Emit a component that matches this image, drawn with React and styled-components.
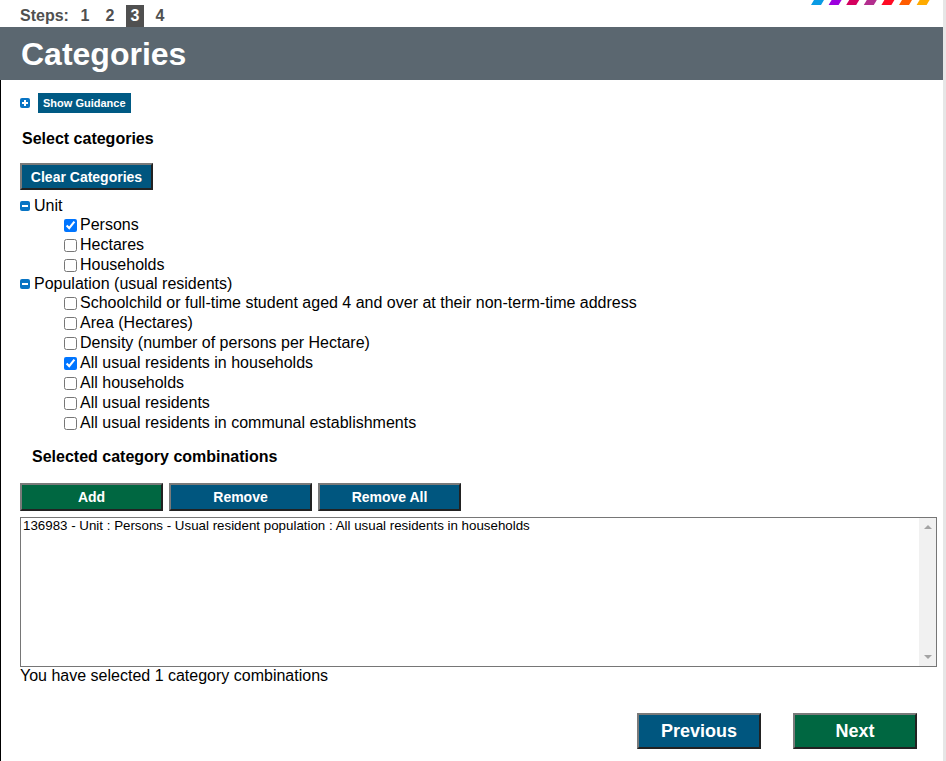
import React from 'react';
import styled, { createGlobalStyle } from 'styled-components';

const GlobalStyle = createGlobalStyle`
  html, body {
    margin: 0;
    padding: 0;
    background: #fff;
  }
  body {
    font-family: "Liberation Sans", Arial, sans-serif;
    color: #000;
  }
`;

const Page = styled.div`
  width: 943px;
  min-height: 761px;
  border-right: 3px solid #e6e6e6;
  box-shadow: inset -1px 0 0 #fff;
`;

const TopBar = styled.div`
  height: 27px;
  display: flex;
  justify-content: space-between;
  align-items: flex-start;
  padding-left: 20px;
`;

const Steps = styled.div`
  display: flex;
  align-items: center;
  height: 22px;
  margin-top: 5px;
  font-size: 16px;
  font-weight: bold;
  color: #505050;
`;

const StepLabel = styled.span`
  margin-right: 7px;
`;

const Step = styled.span`
  display: inline-flex;
  justify-content: center;
  align-items: center;
  width: 18px;
  height: 22px;
  margin-right: 7px;
  color: ${({ active }) => (active ? '#fff' : '#505050')};
  background: ${({ active }) => (active ? '#505050' : 'transparent')};
`;

const Stripes = styled.svg`
  margin-right: 8px;
  display: block;
`;

const Header = styled.h1`
  margin: 0;
  height: 53px;
  background: #5b6770;
  color: #fff;
  font-size: 32px;
  font-weight: bold;
  line-height: 54px;
  padding-left: 21px;
`;

const Content = styled.div`
  border-left: 1px solid #000;
  padding: 13px 0 0 19px;
  min-height: 681px;
  box-sizing: border-box;
`;

const GuidanceRow = styled.div`
  display: flex;
  align-items: center;
  gap: 8px;
`;

const SmallButton = styled.button`
  font-family: inherit;
  font-size: 11px;
  font-weight: bold;
  color: #fff;
  background: #005a84;
  border: none;
  height: 20px;
  padding: 0 5px;
  cursor: pointer;
`;

const SectionTitle = styled.h2`
  margin: 0;
  font-size: ${({ size }) => size || 16}px;
  font-weight: bold;
  line-height: 20px;
  padding-left: ${({ indent }) => indent || 2}px;
`;

const Spacer = styled.div`
  height: ${({ h }) => h}px;
`;

const Button = styled.button`
  font-family: inherit;
  font-weight: bold;
  font-size: ${({ big }) => (big ? 18 : 14)}px;
  color: #fff;
  background: ${({ variant }) => (variant === 'green' ? '#006741' : '#00567f')};
  border: 2px solid;
  border-color: #7a7a7a #222 #222 #7a7a7a;
  width: ${({ width }) => width}px;
  height: ${({ height }) => height}px;
  padding: 0;
  cursor: pointer;
`;

const Tree = styled.div`
  margin-top: 7px;
`;

const GroupRow = styled.div`
  display: flex;
  align-items: center;
  height: 18px;
  font-size: 16px;
  gap: 4px;
`;

const CheckRow = styled.label`
  display: flex;
  align-items: center;
  height: 20px;
  font-size: 16px;
  padding-left: 44px;

  input {
    margin: 0 3px 0 0;
    width: 13px;
    height: 13px;
  }
`;

const ButtonBar = styled.div`
  display: flex;
  gap: 6px;
  margin-top: 16px;
`;

const ListBox = styled.div`
  margin-top: 6px;
  width: 917px;
  height: 150px;
  box-sizing: border-box;
  border: 1px solid #767676;
  display: flex;
`;

const ListItems = styled.div`
  flex: 1;
  padding: 0 2px;
  font-size: 13.33px;
  line-height: 15px;
`;

const Scrollbar = styled.div`
  width: 17px;
  background: #f1f1f1;
  display: flex;
  flex-direction: column;
  justify-content: space-between;
  align-items: center;
  padding: 7px 0;
`;

const Arrow = styled.span`
  width: 0;
  height: 0;
  border-left: 4px solid transparent;
  border-right: 4px solid transparent;
  ${({ down }) =>
    down ? 'border-top: 4px solid #a3a3a3;' : 'border-bottom: 4px solid #a3a3a3;'}
`;

const Status = styled.div`
  font-size: 16px;
  line-height: 18px;
`;

const NavBar = styled.div`
  display: flex;
  justify-content: flex-end;
  gap: 32px;
  margin-top: 28px;
  padding-right: 26px;
`;

const BoxIcon = ({ plus }) => (
  <svg width="10" height="10" viewBox="0 0 10 10">
    <rect x="0" y="0" width="10" height="10" rx="2" fill="#0874c4" />
    <rect x="2" y="4" width="6" height="2" fill="#fff" />
    {plus && <rect x="4" y="2" width="2" height="6" fill="#fff" />}
  </svg>
);

const stripeColors = ['#0a9be4', '#9c00de', '#d4005e', '#b22e8e', '#ff0b24', '#ff5c00', '#ffab00'];

const Check = ({ label, checked }) => (
  <CheckRow>
    <input type="checkbox" defaultChecked={checked} />
    {label}
  </CheckRow>
);

const App = () => {
  return (
    <>
      <GlobalStyle />
      <Page>
        <TopBar>
          <Steps>
            <StepLabel>Steps:</StepLabel>
            <Step>1</Step>
            <Step>2</Step>
            <Step active>3</Step>
            <Step>4</Step>
          </Steps>
          <Stripes width="124" height="5" viewBox="0 0 124 5">
            {stripeColors.map((c, i) => {
              const x = i * 17.6;
              return (
                <polygon
                  key={c}
                  points={`${x + 3},0 ${x + 13},0 ${x + 10},5 ${x},5`}
                  fill={c}
                />
              );
            })}
          </Stripes>
        </TopBar>
        <Header>Categories</Header>
        <Content>
          <GuidanceRow>
            <BoxIcon plus />
            <SmallButton>Show Guidance</SmallButton>
          </GuidanceRow>
          <Spacer h={16} />
          <SectionTitle>Select categories</SectionTitle>
          <Spacer h={14} />
          <Button width={133} height={27}>Clear Categories</Button>
          <Tree>
            <GroupRow>
              <BoxIcon />
              Unit
            </GroupRow>
            <Check label="Persons" checked />
            <Check label="Hectares" />
            <Check label="Households" />
            <GroupRow>
              <BoxIcon />
              Population (usual residents)
            </GroupRow>
            <Check label="Schoolchild or full-time student aged 4 and over at their non-term-time address" />
            <Check label="Area (Hectares)" />
            <Check label="Density (number of persons per Hectare)" />
            <Check label="All usual residents in households" checked />
            <Check label="All households" />
            <Check label="All usual residents" />
            <Check label="All usual residents in communal establishments" />
          </Tree>
          <Spacer h={14} />
          <SectionTitle indent={12}>Selected category combinations</SectionTitle>
          <ButtonBar>
            <Button variant="green" width={143} height={28}>Add</Button>
            <Button width={143} height={28}>Remove</Button>
            <Button width={143} height={28}>Remove All</Button>
          </ButtonBar>
          <ListBox>
            <ListItems>
              136983 - Unit : Persons - Usual resident population : All usual residents in households
            </ListItems>
            <Scrollbar>
              <Arrow />
              <Arrow down />
            </Scrollbar>
          </ListBox>
          <Status>You have selected 1 category combinations</Status>
          <NavBar>
            <Button big width={124} height={36}>Previous</Button>
            <Button big variant="green" width={124} height={36}>Next</Button>
          </NavBar>
        </Content>
      </Page>
    </>
  );
};

export default App;
